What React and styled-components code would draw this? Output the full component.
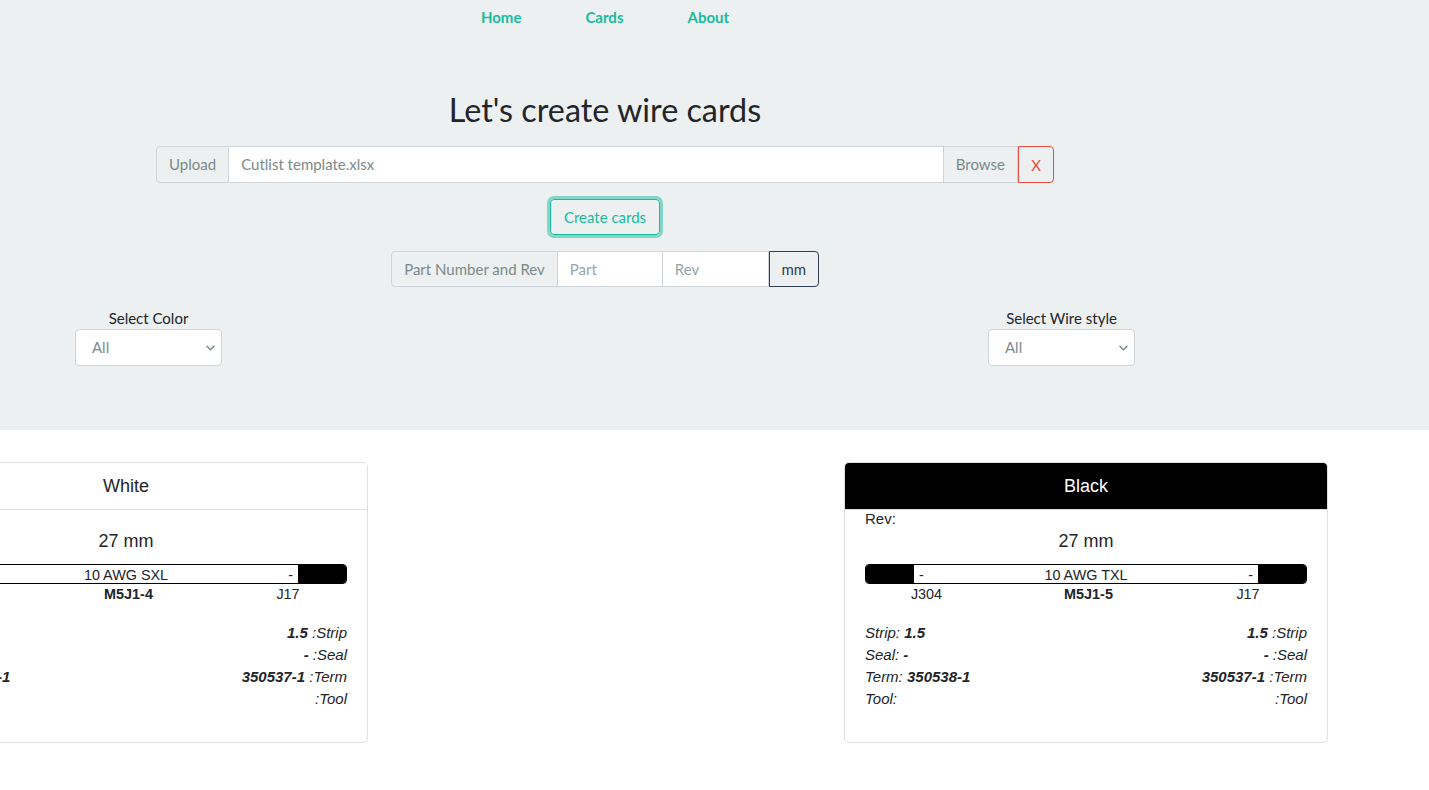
import React from "react";
import styled, { createGlobalStyle } from "styled-components";

const GlobalStyle = createGlobalStyle`
  html, body {
    margin: 0;
    padding: 0;
    background: #fff;
    overflow-x: hidden;
  }
  body {
    font-family: Lato, "Open Sans", sans-serif;
    color: #212529;
  }
  * {
    box-sizing: border-box;
  }
`;

const cards = [
  {
    color: "White",
    headerBg: "#fff",
    headerColor: "#212529",
    length: 27,
    wire: "10 AWG SXL",
    leftEnd: "#000",
    rightEnd: "#000",
    leftLabel: "J304",
    name: "M5J1-4",
    rightLabel: "J17",
    left: { strip: "1.5", seal: "-", term: "350538-1" },
    right: { strip: "1.5", seal: "-", term: "350537-1" },
  },
  {
    color: "Black",
    headerBg: "#000",
    headerColor: "#fff",
    length: 27,
    wire: "10 AWG TXL",
    leftEnd: "#000",
    rightEnd: "#000",
    leftLabel: "J304",
    name: "M5J1-5",
    rightLabel: "J17",
    left: { strip: "1.5", seal: "-", term: "350538-1" },
    right: { strip: "1.5", seal: "-", term: "350537-1" },
  },
];

const Chevron = () => (
  <svg width="9" height="6" viewBox="0 0 9 6">
    <path
      d="M1 1.2l3.5 3.5 3.5-3.5"
      fill="none"
      stroke="#7b8a8b"
      strokeWidth="1.5"
      strokeLinecap="round"
      strokeLinejoin="round"
    />
  </svg>
);

const SelectBox = ({ label }) => (
  <SelectField>
    <SelectLabel>{label}</SelectLabel>
    <SelectWrap>
      <Select defaultValue="all">
        <option value="all">All</option>
      </Select>
      <SelectArrow>
        <Chevron />
      </SelectArrow>
    </SelectWrap>
  </SelectField>
);

const WireCard = ({ card }) => (
  <Card>
    <CardHeader bg={card.headerBg} fg={card.headerColor}>
      {card.color}
    </CardHeader>
    <CardBody>
      <Rev>Rev:</Rev>
      <Length>{card.length} mm</Length>
      <Wire>
        <WireEnd color={card.leftEnd} />
        <WireMiddle>
          <span>-</span>
          <span>{card.wire}</span>
          <span>-</span>
        </WireMiddle>
        <WireEnd color={card.rightEnd} />
      </Wire>
      <Terminals>
        <span>{card.leftLabel}</span>
        <b>{card.name}</b>
        <span>{card.rightLabel}</span>
      </Terminals>
      <Details>
        <div>
          <DetailRow>
            Strip: <b>{card.left.strip}</b>
          </DetailRow>
          <DetailRow>
            Seal: <b>{card.left.seal}</b>
          </DetailRow>
          <DetailRow>
            Term: <b>{card.left.term}</b>
          </DetailRow>
          <DetailRow>Tool:</DetailRow>
        </div>
        <RightCol>
          <DetailRow>
            <b>{card.right.strip}</b> :Strip
          </DetailRow>
          <DetailRow>
            <b>{card.right.seal}</b> :Seal
          </DetailRow>
          <DetailRow>
            <b>{card.right.term}</b> :Term
          </DetailRow>
          <DetailRow>:Tool</DetailRow>
        </RightCol>
      </Details>
    </CardBody>
  </Card>
);

const App = () => {
  return (
    <>
      <GlobalStyle />
      <Top>
        <Inner>
          <Nav>
            <NavLink href="#">Home</NavLink>
            <NavLink href="#">Cards</NavLink>
            <NavLink href="#">About</NavLink>
          </Nav>
          <Title>Let's create wire cards</Title>
          <UploadGroup>
            <Addon>Upload</Addon>
            <FileName>Cutlist template.xlsx</FileName>
            <Addon side="right">Browse</Addon>
            <ClearButton>X</ClearButton>
          </UploadGroup>
          <CreateButton>Create cards</CreateButton>
          <PartGroup>
            <Addon>Part Number and Rev</Addon>
            <TextInput placeholder="Part" w={105} />
            <TextInput placeholder="Rev" w={106} />
            <UnitButton>mm</UnitButton>
          </PartGroup>
          <SelectRow>
            <SelectBox label="Select Color" />
            <SelectBox label="Select Wire style" />
          </SelectRow>
        </Inner>
      </Top>
      <CardRow>
        {cards.map((card) => (
          <WireCard key={card.color} card={card} />
        ))}
      </CardRow>
    </>
  );
};

const Top = styled.div`
  background: #ecf0f1;
  height: 430px;
`;

const Inner = styled.div`
  width: 1210px;
  display: flex;
  flex-direction: column;
  align-items: center;
`;

const Nav = styled.nav`
  display: flex;
  justify-content: center;
  padding-top: 6px;
  height: 36px;
`;

const NavLink = styled.a`
  padding: 0 32px;
  line-height: 22px;
  font-size: 15px;
  font-weight: 700;
  color: #18bc9c;
  text-decoration: none;
`;

const Title = styled.h2`
  margin: 54px 0 16px;
  font-size: 32.3px;
  font-weight: 400;
  line-height: 40px;
  color: #212529;
`;

const UploadGroup = styled.div`
  display: flex;
  width: 898px;
  height: 37px;
  font-size: 15px;
`;

const Addon = styled.div`
  display: flex;
  align-items: center;
  padding: 0 12px 1px;
  background: #ecf0f1;
  color: #7b8a8b;
  border: 1px solid #ced4da;
  border-radius: ${({ side }) => (side === "right" ? "0" : "4px 0 0 4px")};
  white-space: nowrap;
`;

const FileName = styled.div`
  flex: 1;
  display: flex;
  align-items: center;
  padding: 0 12px 1px;
  background: #fff;
  color: #7b8a8b;
  border-top: 1px solid #ced4da;
  border-bottom: 1px solid #ced4da;
`;

const ClearButton = styled.button`
  width: 36px;
  padding: 0;
  background: transparent;
  color: #e74c3c;
  border: 1px solid #e74c3c;
  border-radius: 0 4px 4px 0;
  font-family: Lato, sans-serif;
  font-size: 15px;
`;

const CreateButton = styled.button`
  margin-top: 16px;
  width: 110px;
  height: 36px;
  padding: 0;
  background: transparent;
  color: #18bc9c;
  border: 1px solid #18bc9c;
  border-radius: 4px;
  box-shadow: 0 0 0 3px rgba(24, 188, 156, 0.5);
  font-family: Lato, sans-serif;
  font-size: 15px;
`;

const PartGroup = styled.div`
  display: flex;
  margin-top: 16px;
  height: 36px;
  font-size: 15px;
`;

const TextInput = styled.input`
  width: ${({ w }) => w}px;
  padding: 0 12px;
  border: 1px solid #ced4da;
  border-left: none;
  background: #fff;
  font-family: Lato, sans-serif;
  font-size: 15px;
  color: #7b8a8b;
  outline: none;
  &::placeholder {
    color: #95a5a6;
  }
`;

const UnitButton = styled.button`
  width: 50px;
  padding: 0;
  background: #ecf0f1;
  color: #2c3e50;
  border: 1px solid #2c3e50;
  border-radius: 0 4px 4px 0;
  font-family: Lato, sans-serif;
  font-size: 15px;
  font-weight: 400;
`;

const SelectRow = styled.div`
  align-self: stretch;
  display: flex;
  justify-content: space-between;
  padding: 0 75px;
  margin-top: 20px;
`;

const SelectField = styled.div`
  display: flex;
  flex-direction: column;
  align-items: center;
`;

const SelectLabel = styled.label`
  font-size: 15px;
  line-height: 22px;
  color: #212529;
`;

const SelectWrap = styled.div`
  position: relative;
  width: 147px;
`;

const Select = styled.select`
  appearance: none;
  width: 100%;
  height: 37px;
  padding: 0 30px 1px 16px;
  background: #fff;
  border: 1px solid #ced4da;
  border-radius: 4px;
  font-family: Lato, sans-serif;
  font-size: 15px;
  color: #7b8a8b;
`;

const SelectArrow = styled.span`
  position: absolute;
  right: 7px;
  top: 16px;
  display: flex;
  pointer-events: none;
`;

const CardRow = styled.div`
  display: flex;
  gap: 476px;
  margin-left: -116px;
  padding-top: 32px;
  font-family: "Liberation Sans", Arial, sans-serif;
  color: #212529;
`;

const Card = styled.div`
  flex: 0 0 484px;
  border: 1px solid #dfdfdf;
  border-radius: 5px;
  overflow: hidden;
  background: #fff;
`;

const CardHeader = styled.div`
  height: 47px;
  display: flex;
  align-items: center;
  justify-content: center;
  background: ${({ bg }) => bg};
  color: ${({ fg }) => fg};
  border-bottom: 1px solid #dfdfdf;
  font-size: 18px;
`;

const CardBody = styled.div`
  padding: 0 20px 32px;
`;

const Rev = styled.div`
  font-size: 15px;
  line-height: 18px;
`;

const Length = styled.div`
  margin-top: 2px;
  text-align: center;
  font-size: 18px;
  line-height: 22px;
`;

const Wire = styled.div`
  display: flex;
  margin-top: 12px;
  height: 20px;
  border: 1px solid #000;
  border-radius: 4px;
  overflow: hidden;
`;

const WireEnd = styled.div`
  flex: 0 0 48px;
  background: ${({ color }) => color};
`;

const WireMiddle = styled.div`
  flex: 1;
  display: flex;
  justify-content: space-between;
  padding: 3px 5px 0;
  font-size: 14.4px;
  line-height: 15px;
  background: #fff;
`;

const Terminals = styled.div`
  display: grid;
  grid-template-columns: 123px 1fr 118px;
  padding-top: 1px;
  text-align: center;
  font-size: 14.4px;
  line-height: 18px;
`;

const Details = styled.div`
  display: grid;
  grid-template-columns: 1fr 1fr;
  margin-top: 19px;
  font-size: 15px;
  font-style: italic;
`;

const RightCol = styled.div`
  text-align: right;
`;

const DetailRow = styled.div`
  line-height: 22px;
  height: 22px;
`;

export default App;
